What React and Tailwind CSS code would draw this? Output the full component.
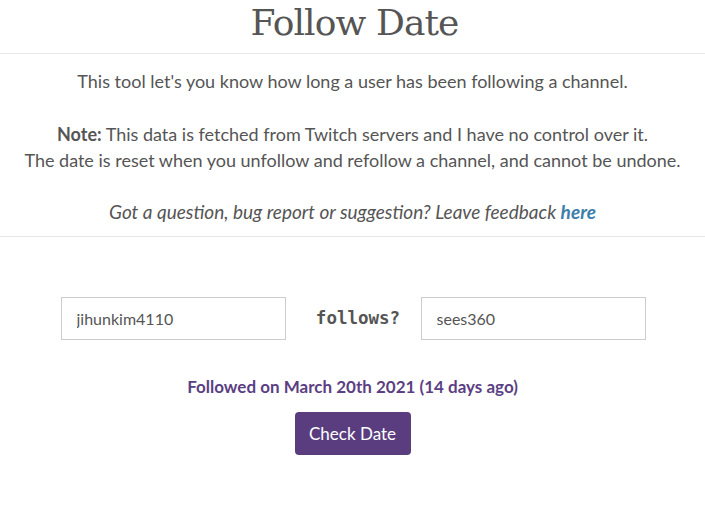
import React, { useState } from "react";

const App = () => {
  const [user, setUser] = useState("jihunkim4110");
  const [channel, setChannel] = useState("sees360");

  return (
    <div className="w-[705px] h-[505px] bg-white text-[#555] font-['Lato','Open_Sans',sans-serif] overflow-hidden">
      {/* header */}
      <div className="h-[54px] border-b border-[#e8e8e8] flex justify-center">
        <h1 className="text-[36px] leading-[46px] font-['DejaVu_Serif',serif] text-[#555] tracking-tight pl-[4px]">
          Follow Date
        </h1>
      </div>

      {/* info */}
      <div className="border-b border-[#e8e8e8] text-center text-[18px] pt-[15px] pb-[12px]">
        <p className="leading-[24px]">
          This tool let's you know how long a user has been following a channel.
        </p>
        <p className="mt-[28px] leading-[26px]">
          <b className="font-bold">Note:</b> This data is fetched from Twitch servers and I have no control over it.
          <br />
          The date is reset when you unfollow and refollow a channel, and cannot be undone.
        </p>
        <p className="mt-[27px] leading-[24px] italic text-[19px]">
          Got a question, bug report or suggestion? Leave feedback{" "}
          <a href="#" className="font-bold text-[#3d7eaa]">here</a>
        </p>
      </div>

      {/* form */}
      <div className="flex items-center justify-center pt-[60px] pl-[1px]">
        <input
          type="text"
          value={user}
          onChange={(e) => setUser(e.target.value)}
          className="w-[225px] h-[43px] border border-[#ccc] px-[15px] text-[16px] text-[#555] outline-none"
        />
        <span className="w-[135px] text-center pl-[10px] font-['DejaVu_Sans_Mono',monospace] font-bold text-[17.5px] text-[#555]">
          follows?
        </span>
        <input
          type="text"
          value={channel}
          onChange={(e) => setChannel(e.target.value)}
          className="w-[225px] h-[43px] border border-[#ccc] px-[15px] text-[16px] text-[#555] outline-none"
        />
      </div>

      <div className="flex flex-col items-center pt-[36px]">
        <p className="text-[17px] font-bold text-[#5b3f82] leading-[22px]">
          Followed on March 20th 2021 (14 days ago)
        </p>
        <button className="mt-[14px] w-[116px] h-[43px] bg-[#5a3d7f] text-white text-[17px] rounded-[4px]">
          Check Date
        </button>
      </div>
    </div>
  );
};

export default App;
